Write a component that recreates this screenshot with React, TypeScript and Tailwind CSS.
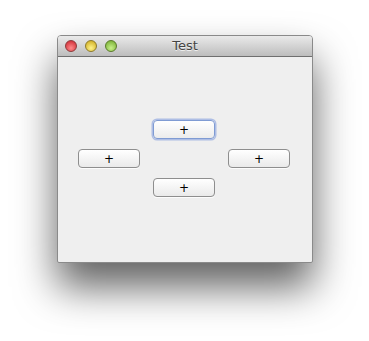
import React from "react";

function Btn({ focused }: { focused?: boolean }) {
  return (
    <button
      className={
        focused
          ? "h-[19px] w-[62px] rounded-[4px] border border-[#7f9bd3] bg-gradient-to-b from-[#ffffff] to-[#ececec] text-[12px] leading-none text-black shadow-[0_0_0_1.5px_rgba(120,150,220,0.55)] flex items-center justify-center"
          : "h-[19px] w-[62px] rounded-[4px] border border-[#8e8e8e] bg-gradient-to-b from-[#ffffff] to-[#eaeaea] text-[12px] leading-none text-black shadow-[0_1px_0_rgba(255,255,255,0.8)] flex items-center justify-center"
      }
      style={{ fontFamily: '"DejaVu Sans", sans-serif' }}
    >
      +
    </button>
  );
}

function Light({ from, to, border }: { from: string; to: string; border: string }) {
  return (
    <div
      className="h-[12px] w-[12px] rounded-full"
      style={{
        background: `radial-gradient(circle at 50% 70%, ${from}, ${to})`,
        border: `1px solid ${border}`,
      }}
    />
  );
}

export default function App() {
  return (
    <div className="h-[341px] w-[369px] bg-white overflow-hidden pt-[35px] pl-[57px]">
      <div className="flex h-[228px] w-[256px] flex-col overflow-hidden rounded-t-[4px] rounded-b-[2px] border border-[#8a8a8a] bg-[#efefef] shadow-[0_24px_40px_rgba(0,0,0,0.62)]">
        <div className="relative flex h-[21px] shrink-0 items-center border-b border-[#6f6f6f] bg-gradient-to-b from-[#eaeaea] to-[#bdbdbd] pl-[7px]">
          <div className="flex gap-[8px]">
            <Light from="#ff8a8a" to="#c9202a" border="#8c3a3a" />
            <Light from="#fff38a" to="#c9a414" border="#8c7a2a" />
            <Light from="#c8f08a" to="#6fa82a" border="#5a7a2a" />
          </div>
          <div
            className="absolute inset-0 flex items-center justify-center text-[13px] text-[#444] [text-shadow:0_1px_0_rgba(255,255,255,0.7)]"
            style={{ fontFamily: '"DejaVu Sans", sans-serif' }}
          >
            Test
          </div>
        </div>
        <div className="flex-1">
          <div className="ml-[20px] mt-[63px] grid grid-cols-[62px_62px_62px] gap-x-[13px] gap-y-[10px]">
            <div />
            <Btn focused />
            <div />
            <Btn />
            <div />
            <Btn />
            <div />
            <Btn />
            <div />
          </div>
        </div>
      </div>
    </div>
  );
}
